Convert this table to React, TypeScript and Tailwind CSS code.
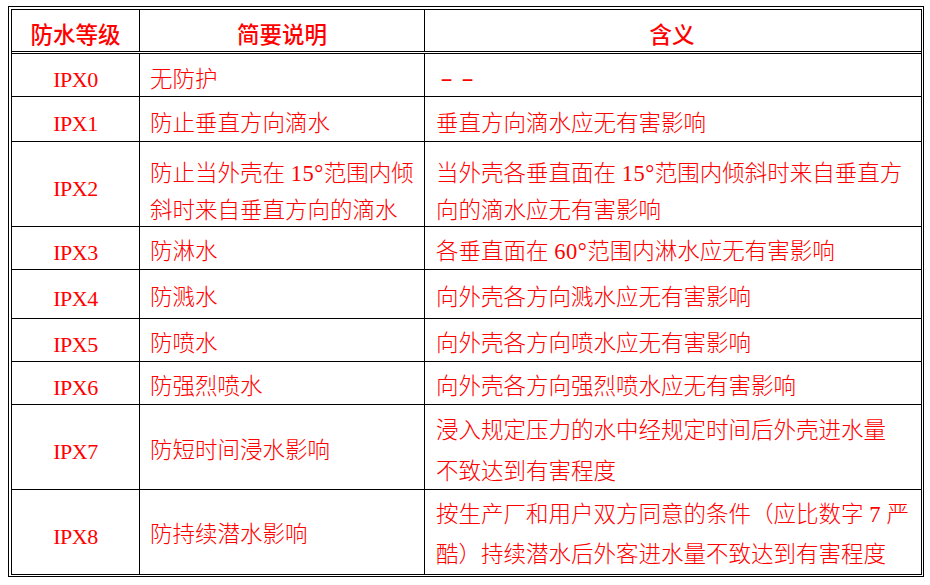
const rows = [
  { code: "IPX0", desc: ["无防护"], mean: ["--"], h: "h-[43px]", pad: "pt-[9px]", lead: "leading-[30px]", dash: true },
  { code: "IPX1", desc: ["防止垂直方向滴水"], mean: ["垂直方向滴水应无有害影响"], h: "h-[45px]", pad: "pt-[9px]", lead: "leading-[30px]" },
  {
    code: "IPX2",
    desc: ["防止当外壳在 15°范围内倾", "斜时来自垂直方向的滴水"],
    mean: ["当外壳各垂直面在 15°范围内倾斜时来自垂直方", "向的滴水应无有害影响"],
    h: "h-[85px]",
    pad: "pt-[15px]",
    lead: "leading-[37px]",
  },
  { code: "IPX3", desc: ["防淋水"], mean: ["各垂直面在 60°范围内淋水应无有害影响"], h: "h-[43px]", pad: "pt-[8px]", lead: "leading-[30px]" },
  { code: "IPX4", desc: ["防溅水"], mean: ["向外壳各方向溅水应无有害影响"], h: "h-[49px]", pad: "pt-[7px]", lead: "leading-[30px]" },
  { code: "IPX5", desc: ["防喷水"], mean: ["向外壳各方向喷水应无有害影响"], h: "h-[43px]", pad: "pt-[8px]", lead: "leading-[30px]" },
  { code: "IPX6", desc: ["防强烈喷水"], mean: ["向外壳各方向强烈喷水应无有害影响"], h: "h-[43px]", pad: "pt-[8px]", lead: "leading-[30px]" },
  {
    code: "IPX7",
    desc: ["防短时间浸水影响"],
    mean: ["浸入规定压力的水中经规定时间后外壳进水量", "不致达到有害程度"],
    h: "h-[85px]",
    pad: "pt-[7px]",
    lead: "leading-[41px]",
  },
  {
    code: "IPX8",
    desc: ["防持续潜水影响"],
    mean: ["按生产厂和用户双方同意的条件（应比数字 7 严", "酷）持续潜水后外客进水量不致达到有害程度"],
    h: "h-[84px]",
    pad: "pt-[6px]",
    lead: "leading-[40px]",
    last: true,
  },
];

// latin bits (digits, degree sign) keep the regular serif weight
function Line({ text }: { text: string }) {
  const parts = text.split(/([0-9°]+)/);
  return (
    <div>
      {parts.map((p, i) =>
        /^[0-9°]+$/.test(p) ? (
          <span key={i} className="font-normal tracking-[0.5px]">
            {p}
          </span>
        ) : (
          <span key={i}>{p}</span>
        )
      )}
    </div>
  );
}

export default function App() {
  return (
    <div className="pt-[6px] pl-[8px] bg-white font-['Liberation_Serif','Noto_Sans_CJK_SC',serif] text-[#ff0000] font-light">
      <div className="w-[916px] border border-black pt-[2px] pl-[2px] pr-px pb-px">
        <div className="border border-black">
          {/* header */}
          <div className="flex h-[44px] border-b-[3px] border-double border-black text-[22.5px] font-medium">
            <div className="w-[128px] shrink-0 border-r border-black flex items-center justify-center pt-[10px]">
              防水等级
            </div>
            <div className="w-[285px] shrink-0 border-r border-black flex items-center justify-center pt-[10px]">
              简要说明
            </div>
            <div className="flex-1 flex items-center justify-center pt-[10px] pr-[2px]">含义</div>
          </div>

          {rows.map((r) => (
            <div
              key={r.code}
              className={`flex ${r.h} ${r.last ? "" : "border-b border-black"} text-[22.5px] whitespace-nowrap`}
            >
              <div className="w-[128px] shrink-0 border-r border-black flex items-center justify-center pt-[9px] text-[22px] font-normal tracking-[-0.5px]">
                {r.code}
              </div>
              <div className={`w-[285px] shrink-0 border-r border-black flex flex-col justify-center pl-[10px] ${r.pad} ${r.lead}`}>
                {r.desc.map((t) => (
                  <Line key={t} text={t} />
                ))}
              </div>
              <div className={`flex-1 flex flex-col justify-center pl-[11px] ${r.pad} ${r.lead}`}>
                {r.mean.map((t) =>
                  r.dash ? (
                    <div key={t}>
                      <span className="inline-block origin-left scale-x-[1.6] font-['Liberation_Mono'] font-normal text-[22px]">
                        {t}
                      </span>
                    </div>
                  ) : (
                    <Line key={t} text={t} />
                  )
                )}
              </div>
            </div>
          ))}
        </div>
      </div>
    </div>
  );
}
